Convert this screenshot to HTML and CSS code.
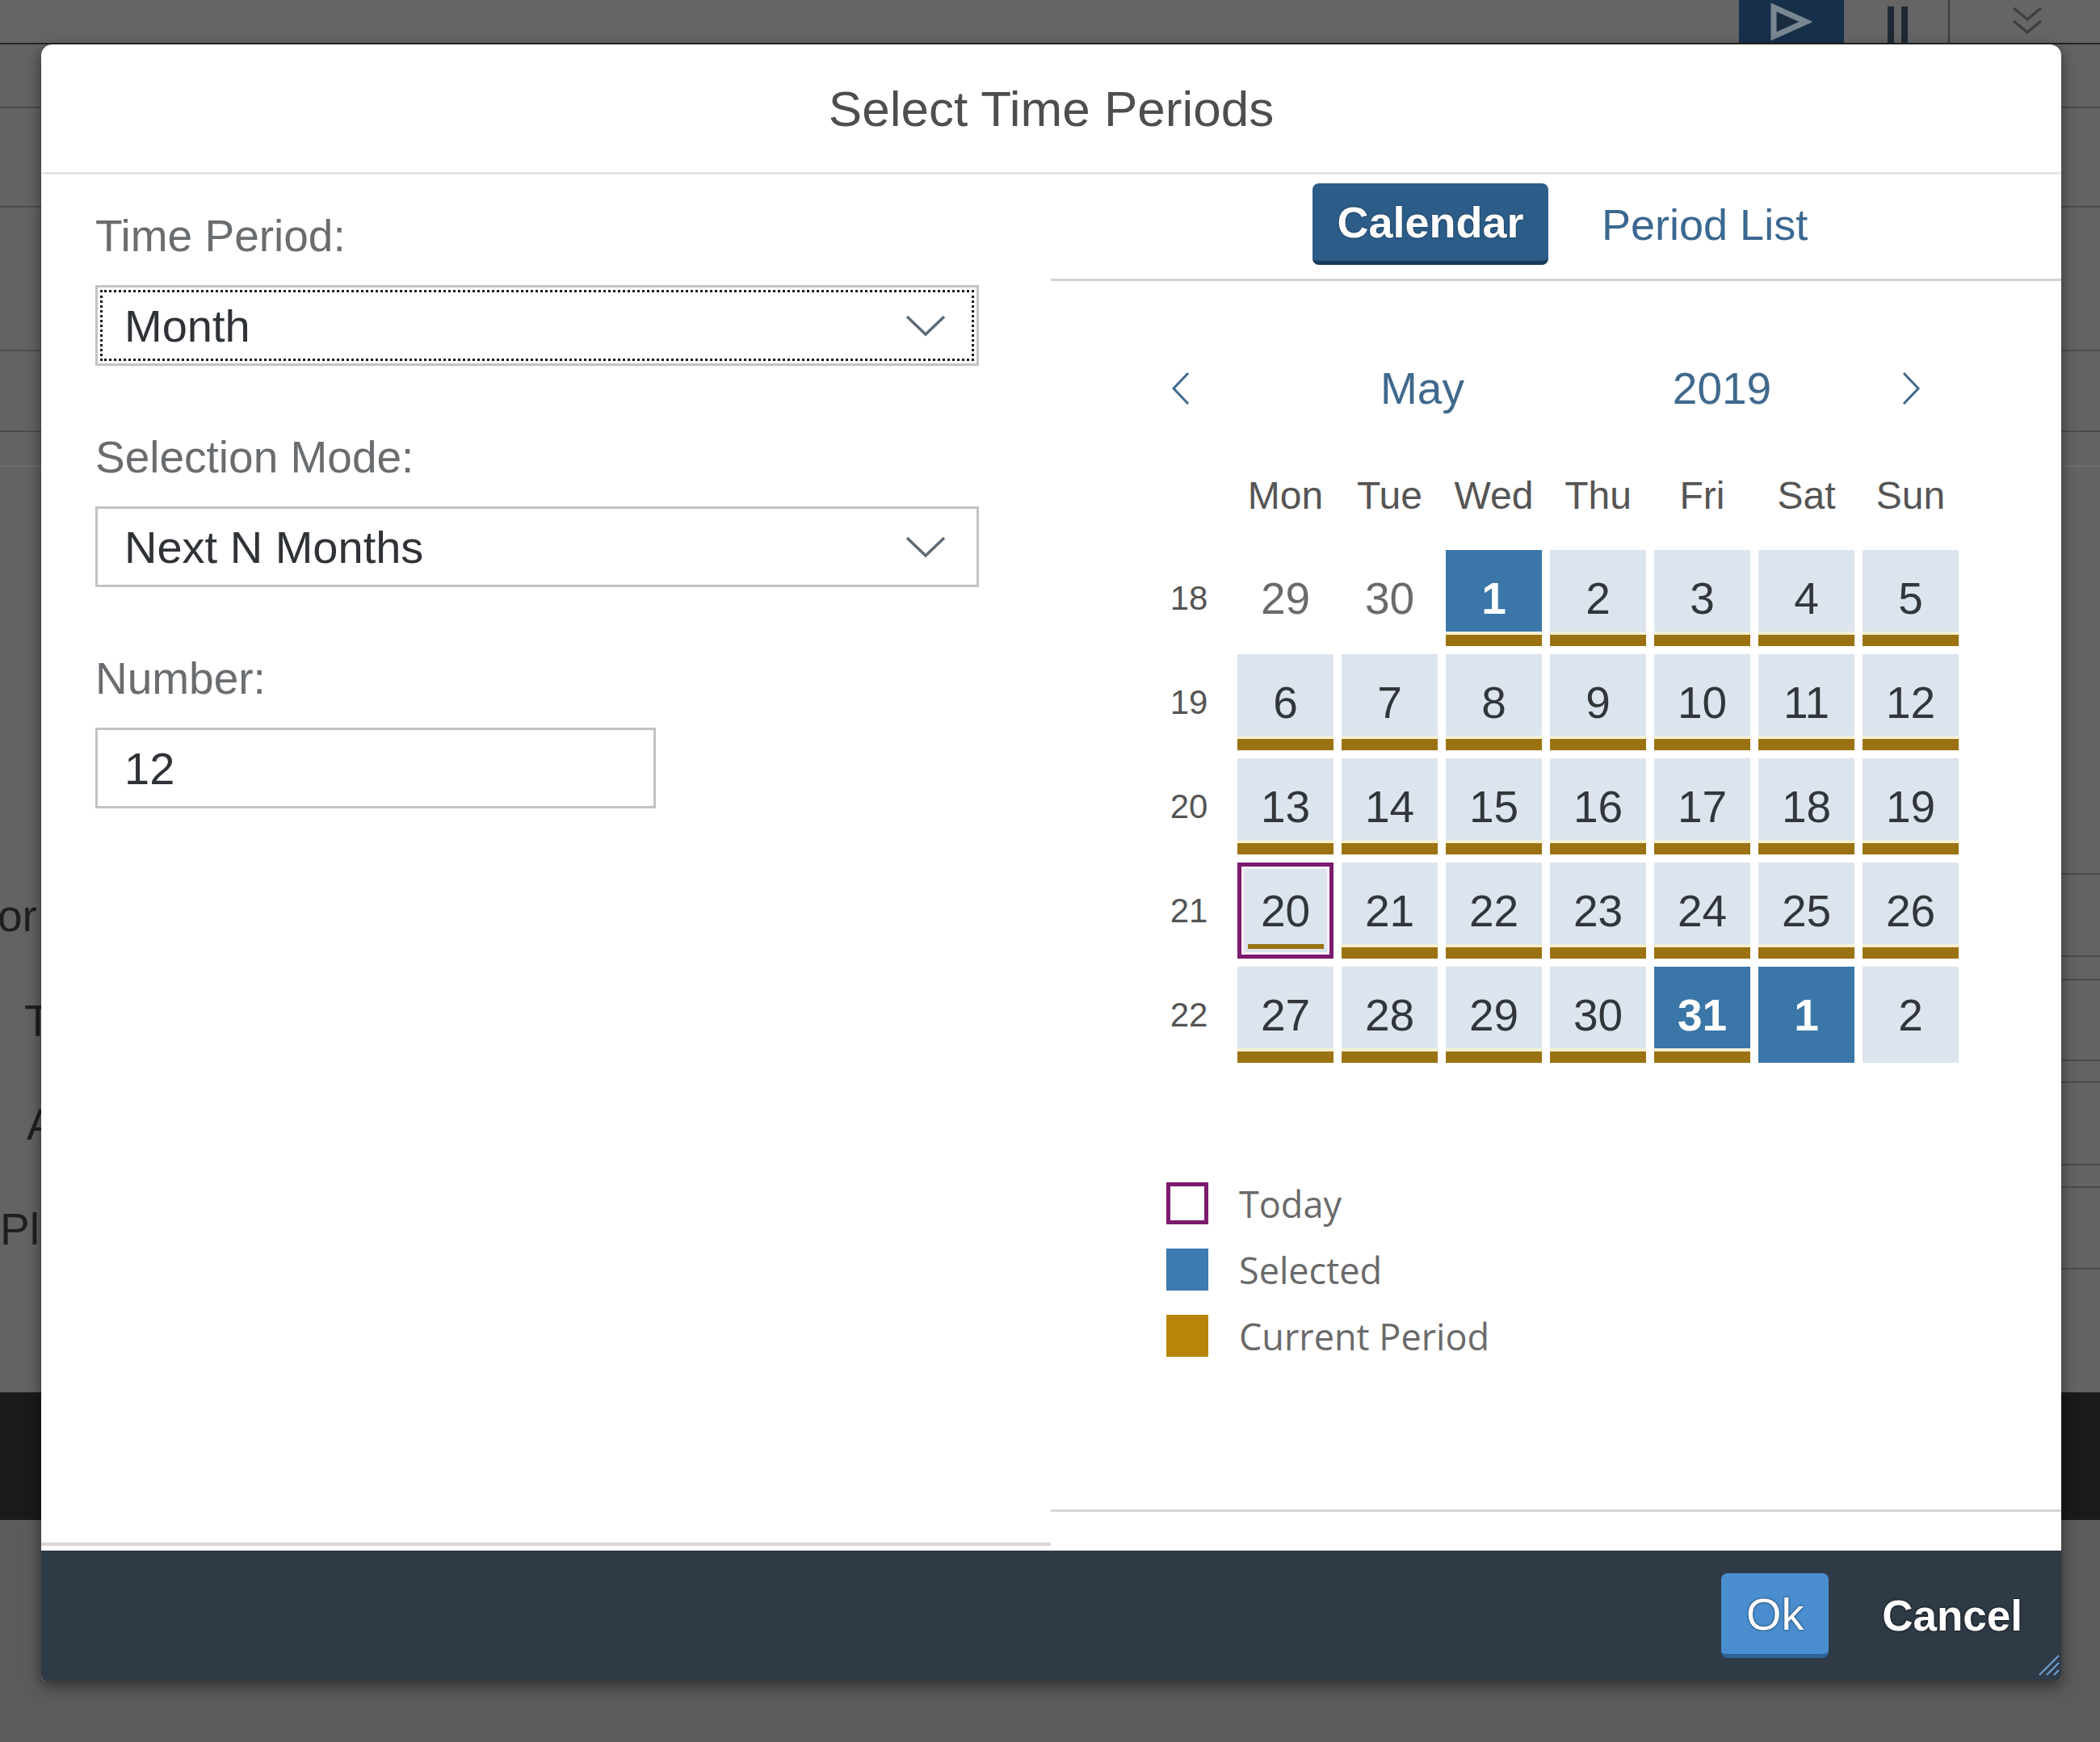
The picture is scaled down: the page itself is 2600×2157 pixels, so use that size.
FILE: index.html
```html
<!DOCTYPE html>
<html lang="en">
<head>
<meta charset="utf-8">
<title>Select Time Periods</title>
<link rel="stylesheet" href="styles.css">
</head>
<body>
<div class="backdrop">
  <div class="toolbar">
    <div class="tb-play"><svg width="52" height="46" viewBox="0 0 52 46"><polygon points="5,5 45,23 5,41" fill="#1a2d3e" stroke="#7a8791" stroke-width="7"/></svg></div>
    <div class="tb-pause"><span></span><span></span></div>
    <div class="tb-sep"></div>
    <div class="tb-more"><svg width="40" height="46" viewBox="0 0 40 46"><polyline points="3,4 20,18 37,4" fill="none" stroke="#3d3d3d" stroke-width="3"/><polyline points="3,20 20,34 37,20" fill="none" stroke="#3d3d3d" stroke-width="3"/></svg></div>
  </div>
  <div class="brow h79"></div>
  <div class="brow h123"></div>
  <div class="brow h178"></div>
  <div class="brow h100"></div>
  <div class="brow light h43"></div>
  <div class="brow rline h505"></div>
  <div class="brow rline h102"><span class="bt t-or">or</span></div>
  <div class="brow rline h29"></div>
  <div class="brow rline h100"><span class="bt t-t">Ty</span></div>
  <div class="brow rline h27"></div>
  <div class="brow rline h102"><span class="bt t-a">Ac</span></div>
  <div class="brow rline h28"></div>
  <div class="brow rline h101"><span class="bt t-pl">Pla</span></div>
  <div class="brow plain h152"></div>
  <div class="band"></div>
  <div class="floor"></div>
</div>

<div class="dialog" role="dialog" aria-label="Select Time Periods">
  <header class="dlg-head"><h1>Select Time Periods</h1></header>
  <div class="dlg-body">
    <section class="left">
      <div class="field">
        <label>Time Period:</label>
        <div class="control select focused"><span>Month</span><svg class="chev" width="50" height="28" viewBox="0 0 50 28"><polyline points="2,3 25,25 48,3" fill="none" stroke="#5d6b77" stroke-width="3.5"/></svg></div>
      </div>
      <div class="field">
        <label>Selection Mode:</label>
        <div class="control select"><span>Next N Months</span><svg class="chev" width="50" height="28" viewBox="0 0 50 28"><polyline points="2,3 25,25 48,3" fill="none" stroke="#5d6b77" stroke-width="3.5"/></svg></div>
      </div>
      <div class="field">
        <label>Number:</label>
        <div class="control input"><span>12</span></div>
      </div>
    </section>

    <section class="right">
      <div class="tabs">
        <button class="tab active">Calendar</button>
        <button class="tab">Period List</button>
      </div>
      <div class="nav">
        <svg width="24" height="42" viewBox="0 0 24 42"><polyline points="21,2 3,21 21,40" fill="none" stroke="#40698d" stroke-width="3"/></svg>
        <span>May</span>
        <span>2019</span>
        <span></span>
        <svg width="24" height="42" viewBox="0 0 24 42"><polyline points="3,2 21,21 3,40" fill="none" stroke="#40698d" stroke-width="3"/></svg>
      </div>
      <div class="dow">
        <span></span><span>Mon</span><span>Tue</span><span>Wed</span><span>Thu</span><span>Fri</span><span>Sat</span><span>Sun</span>
      </div>
      <div class="weeks">
        <div class="wk">18</div>
        <div class="d other">29</div><div class="d other">30</div><div class="d sel">1</div><div class="d cur">2</div><div class="d cur">3</div><div class="d cur">4</div><div class="d cur">5</div>
        <div class="wk">19</div>
        <div class="d cur">6</div><div class="d cur">7</div><div class="d cur">8</div><div class="d cur">9</div><div class="d cur">10</div><div class="d cur">11</div><div class="d cur">12</div>
        <div class="wk">20</div>
        <div class="d cur">13</div><div class="d cur">14</div><div class="d cur">15</div><div class="d cur">16</div><div class="d cur">17</div><div class="d cur">18</div><div class="d cur">19</div>
        <div class="wk">21</div>
        <div class="d today">20</div><div class="d cur">21</div><div class="d cur">22</div><div class="d cur">23</div><div class="d cur">24</div><div class="d cur">25</div><div class="d cur">26</div>
        <div class="wk">22</div>
        <div class="d cur">27</div><div class="d cur">28</div><div class="d cur">29</div><div class="d cur">30</div><div class="d sel">31</div><div class="d selfull">1</div><div class="d next">2</div>
      </div>
      <ul class="legend">
        <li><span class="sw sw-today"></span>Today</li>
        <li><span class="sw sw-sel"></span>Selected</li>
        <li><span class="sw sw-cur"></span>Current Period</li>
      </ul>
    </section>
  </div>
  <footer class="dlg-foot">
    <button class="btn ok">Ok</button>
    <button class="btn cancel">Cancel</button>
    <svg class="grip" width="34" height="34" viewBox="0 0 34 34"><line x1="33" y1="9" x2="9" y2="33" stroke="#6fa0d4" stroke-width="2"/><line x1="33" y1="18" x2="18" y2="33" stroke="#6fa0d4" stroke-width="2"/><line x1="33" y1="27" x2="27" y2="33" stroke="#6fa0d4" stroke-width="2"/></svg>
  </footer>
</div>
</body>
</html>
```

FILE: styles.css
```css
* { box-sizing: border-box; }
html, body { margin: 0; padding: 0; }
body {
  width: 2600px;
  height: 2157px;
  overflow: hidden;
  position: relative;
  background: #5b5b5b;
  font-family: "Liberation Sans", Arial, sans-serif;
}

/* ---------- covered application behind the dialog ---------- */
.backdrop { display: flex; flex-direction: column; height: 2157px; }
.toolbar {
  height: 55px; flex: none; background: #656565;
  border-bottom: 2px solid #262626;
  display: flex; justify-content: flex-end; align-items: flex-start;
  padding-right: 70px;
}
.tb-play { width: 130px; height: 53px; background: #17304a; padding: 4px 0 0 38px; }
.tb-pause { margin-left: 54px; width: 25px; height: 53px; padding-top: 8px; display: flex; justify-content: space-between; }
.tb-pause span { width: 8px; background: #1d2a35; }
.tb-sep { margin-left: 50px; width: 2px; height: 53px; background: #3a3a3a; }
.tb-more { margin-left: 76px; width: 40px; padding-top: 6px; }

.brow {
  flex: none; background: #636363;
  border-bottom: 2px solid #4b4b4b;
  display: flex; align-items: center;
}
.brow.light { border-bottom-color: #6f6f6f; }
.brow.plain { border-bottom: none; }
.brow.rline {
  border-bottom: none;
  background: linear-gradient(#4b4b4b, #4b4b4b) right bottom / 1300px 2px no-repeat, #636363;
}
.h79 { height: 79px; } .h123 { height: 123px; } .h178 { height: 178px; }
.h100 { height: 100px; } .h43 { height: 43px; } .h505 { height: 505px; }
.h102 { height: 102px; } .h29 { height: 29px; } .h27 { height: 27px; }
.h28 { height: 28px; } .h101 { height: 101px; } .h152 { height: 152px; }
.bt { font-size: 55px; color: #1f1f1f; white-space: nowrap; }
.t-or { margin-left: -3px; }
.t-t { margin-left: 30px; }
.t-a { margin-left: 33px; }
.t-pl { margin-left: 0; }
.band { height: 158px; flex: none; background: #191a1c; }
.floor { flex: 1; background: #5b5b5b; }

/* ---------- dialog ---------- */
.dialog {
  position: absolute; left: 51px; top: 55px;
  width: 2501px; height: 2026px;
  background: #fff;
  border-radius: 14px 14px 6px 6px;
  box-shadow: 0 6px 18px rgba(0, 0, 0, .5);
  display: flex; flex-direction: column;
  overflow: hidden;
}
.dlg-head {
  height: 161px; flex: none;
  border-bottom: 3px solid #e6e6e6;
  display: flex; align-items: center; justify-content: center;
}
.dlg-head h1 { margin: 0; font-weight: normal; font-size: 62px; color: #4e4e4e; }
.dlg-body { flex: 1; display: flex; min-height: 0; }

/* left form */
.left {
  width: 1250px; flex: none;
  padding: 43px 0 0 67px;
  margin-bottom: 6px;
  border-bottom: 4px solid #d6d6d6;
}
.field { display: flex; flex-direction: column; align-items: flex-start; margin-bottom: 80px; }
.field label { font-size: 55px; line-height: 66px; color: #6a6d70; margin-bottom: 28px; }
.control {
  height: 100px; border: 3px solid #c3c3c3; background: #fff;
  display: flex; align-items: center; justify-content: space-between;
  padding: 0 38px 0 33px;
  font-size: 56px; color: #2f3337;
}
.select { width: 1094px; }
.input { width: 694px; }
.focused { outline: 3px dotted #1b1b1b; outline-offset: -9px; }

/* right calendar */
.right {
  flex: 1; display: flex; flex-direction: column;
  margin-bottom: 48px;
  border-bottom: 3px solid #d6d6d6;
}
.tabs {
  height: 132px; flex: none;
  border-bottom: 3px solid #d3d3d3;
  display: flex; align-items: flex-start;
  padding: 11px 0 0 324px;
}
.tab {
  font-family: inherit; font-size: 54px; height: 101px;
  border: 0; background: none; padding: 0 33px;
  color: #3b6890; cursor: pointer;
}
.tab.active {
  width: 292px; padding: 0;
  background: #2c5c88; color: #fff; font-weight: bold;
  border-radius: 8px; border-bottom: 5px solid #173a5b;
  text-shadow: 0 0 2px #0e2236;
}
.tab + .tab { margin-left: 33px; }

.nav {
  margin: 83px 0 0 121px; height: 100px;
  display: grid; grid-template-columns: 80px 518px 224px 82px 80px;
  align-items: center; justify-items: center;
  font-size: 55px; color: #40698d;
}
.dow, .weeks {
  margin-left: 121px;
  display: grid; grid-template-columns: 100px repeat(7, 119px);
  column-gap: 10px;
}
.dow {
  margin-top: 42px; margin-bottom: 28px; height: 80px;
  align-items: center; justify-items: center;
  font-size: 48px; color: #555;
}
.weeks { grid-auto-rows: 119px; row-gap: 10px; }
.wk { display: flex; align-items: center; justify-content: center; font-size: 42px; color: #555; }
.d { display: flex; align-items: center; justify-content: center; font-size: 55px; color: #32363a; }
.d.other { color: #6a6a6a; }
.d.cur { background: linear-gradient(to top, #9b7211 0 14px, #f4efd3 14px 18px, #dce5ee 18px); }
.d.sel {
  background: linear-gradient(to top, #9b7211 0 14px, #f4efd3 14px 18px, #3a76a8 18px);
  color: #fff; font-weight: bold;
}
.d.selfull { background: #3a76a8; color: #fff; font-weight: bold; }
.d.next { background: #dce5ee; }
.d.today {
  border: 5px solid #7c1b6d;
  box-shadow: inset 0 0 0 3px #fbeef7;
  background: linear-gradient(#9b7211, #9b7211) center bottom 7px / 94px 6px no-repeat, #dce5ee;
}

.legend {
  list-style: none; margin: 148px 0 0 143px; padding: 0;
  display: flex; flex-direction: column; gap: 30px;
  font-family: "Open Sans", sans-serif; font-size: 45px; color: #6a6a6a;
}
.legend li { display: flex; align-items: center; gap: 38px; height: 52px; }
.sw { width: 52px; height: 52px; flex: none; }
.sw-today { border: 5px solid #7c1b6d; }
.sw-sel { background: #3c7ab0; }
.sw-cur { background: #b98509; }

/* footer */
.dlg-foot {
  height: 161px; flex: none; background: #2e3a46;
  display: flex; align-items: center; justify-content: flex-end;
  padding-right: 15px; position: relative;
}
.btn { font-family: inherit; color: #fff; border: 0; cursor: pointer; }
.ok {
  width: 133px; height: 105px; font-size: 56px;
  background: #4a8ecf; border-radius: 8px;
  border-bottom: 5px solid #2d6397;
  text-shadow: 0 0 3px #10273d;
}
.cancel {
  height: 105px; padding: 0 33px; margin-left: 33px;
  background: none; font-size: 53px; font-weight: bold;
  text-shadow: 0 0 3px #000;
}
.grip { position: absolute; right: 2px; bottom: 6px; }
```
